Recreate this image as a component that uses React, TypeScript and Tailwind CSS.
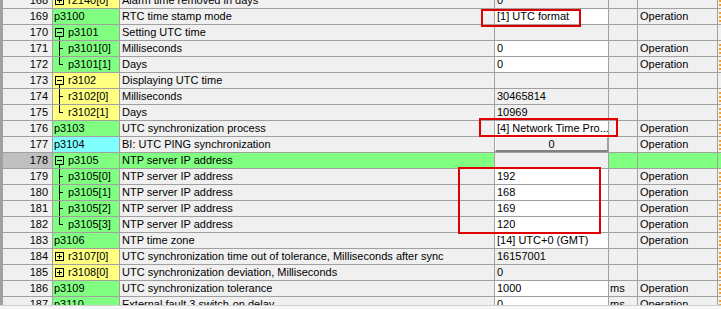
import React from 'react';

type Row = {
    n: number;
    p: string;
    c: 'g' | 'y' | 'c';
    d: string;
    icon?: '+' | '-';
    tree?: 'mid' | 'end';
    v?: string;
    vw?: boolean;
    button?: string;
    u?: string;
    a?: string;
    sel?: boolean;
    group?: boolean;
};

const rows: Row[] = [
    { n: 168, p: 'r2140[0]', c: 'y', icon: '+', d: 'Alarm time removed in days', v: '0' },
    { n: 169, p: 'p3100', c: 'g', d: 'RTC time stamp mode', v: '[1] UTC format', vw: true, a: 'Operation' },
    { n: 170, p: 'p3101', c: 'g', icon: '-', d: 'Setting UTC time', group: true },
    { n: 171, p: 'p3101[0]', c: 'g', tree: 'mid', d: 'Milliseconds', v: '0', vw: true, a: 'Operation' },
    { n: 172, p: 'p3101[1]', c: 'g', tree: 'end', d: 'Days', v: '0', vw: true, a: 'Operation' },
    { n: 173, p: 'r3102', c: 'y', icon: '-', d: 'Displaying UTC time', group: true },
    { n: 174, p: 'r3102[0]', c: 'y', tree: 'mid', d: 'Milliseconds', v: '30465814' },
    { n: 175, p: 'r3102[1]', c: 'y', tree: 'end', d: 'Days', v: '10969' },
    { n: 176, p: 'p3103', c: 'g', d: 'UTC synchronization process', v: '[4] Network Time Pro...', vw: true, a: 'Operation' },
    { n: 177, p: 'p3104', c: 'c', d: 'BI: UTC PING synchronization', button: '0', a: 'Operation' },
    { n: 178, p: 'p3105', c: 'g', icon: '-', d: 'NTP server IP address', sel: true, group: true },
    { n: 179, p: 'p3105[0]', c: 'g', tree: 'mid', d: 'NTP server IP address', v: '192', vw: true, a: 'Operation' },
    { n: 180, p: 'p3105[1]', c: 'g', tree: 'mid', d: 'NTP server IP address', v: '168', vw: true, a: 'Operation' },
    { n: 181, p: 'p3105[2]', c: 'g', tree: 'mid', d: 'NTP server IP address', v: '169', vw: true, a: 'Operation' },
    { n: 182, p: 'p3105[3]', c: 'g', tree: 'end', d: 'NTP server IP address', v: '120', vw: true, a: 'Operation' },
    { n: 183, p: 'p3106', c: 'g', d: 'NTP time zone', v: '[14] UTC+0 (GMT)', vw: true, a: 'Operation' },
    { n: 184, p: 'r3107[0]', c: 'y', icon: '+', d: 'UTC synchronization time out of tolerance, Milliseconds after sync', v: '16157001' },
    { n: 185, p: 'r3108[0]', c: 'y', icon: '+', d: 'UTC synchronization deviation, Milliseconds', v: '0' },
    { n: 186, p: 'p3109', c: 'g', d: 'UTC synchronization tolerance', v: '1000', vw: true, u: 'ms', a: 'Operation' },
    { n: 187, p: 'p3110', c: 'g', d: 'External fault 3 switch-on delay', v: '0', vw: true, u: 'ms', a: 'Operation' },
];

const paramBg = { g: 'bg-[#80ff80]', y: 'bg-[#ffff80]', c: 'bg-[#80ffff]' };

const TreeGlyph = ({ row }: { row: Row }) => (
    <svg width="14" height="15" viewBox="0 0 14 15" className="shrink-0" shapeRendering="crispEdges">
        {row.icon && (
            <>
                <rect x="1.5" y="3.5" width="8" height="8" fill="none" stroke="#000" />
                <line x1="3" y1="7.5" x2="8" y2="7.5" stroke="#000" />
                {row.icon === '+' && <line x1="5.5" y1="5" x2="5.5" y2="10" stroke="#000" />}
                {row.icon === '-' && <line x1="5.5" y1="12" x2="5.5" y2="15" stroke="#000" />}
            </>
        )}
        {row.tree && (
            <>
                <line x1="5.5" y1="0" x2="5.5" y2={row.tree === 'mid' ? 15 : 8} stroke="#000" />
                <line x1="5.5" y1="7.5" x2="9" y2="7.5" stroke="#000" />
            </>
        )}
    </svg>
);

const TableRow = ({ row }: { row: Row }) => {
    const rowGreen = row.sel;
    const cell = 'h-full border-r border-[#a0a0a0] flex items-center overflow-hidden whitespace-nowrap shrink-0';
    return (
        <div className="flex h-[16px] border-b border-[#a0a0a0] leading-[15px]">
            <div className={`${cell} w-[50px] justify-end pr-[4px] ${row.sel ? 'bg-[#c0c0c0]' : ''}`}>{row.n}</div>
            <div className={`${cell} w-[67px] pl-[1px] ${paramBg[row.c]}`}>
                {(row.icon || row.tree) && <TreeGlyph row={row} />}
                <span>{row.p}</span>
            </div>
            <div className={`${cell} w-[375px] pl-[2px] ${rowGreen ? 'bg-[#80ff80]' : ''}`}>{row.d}</div>
            <div className={`${cell} w-[114px] ${row.vw ? 'bg-white' : ''} ${row.button ? '' : 'pl-[2px]'}`}>
                {row.button ? (
                    <div className="w-full h-full flex items-center justify-center bg-[#f0f0f0] border-t border-l border-white border-b-2 border-r border-b-[#808080] border-r-[#a0a0a0]">
                        {row.button}
                    </div>
                ) : (
                    row.v
                )}
            </div>
            <div className={`${cell} w-[29px] pl-[1px] ${rowGreen ? 'bg-[#80ff80]' : ''}`}>{row.u}</div>
            <div className={`${cell} w-[80px] pl-[2px] ${rowGreen ? 'bg-[#80ff80]' : ''}`}>{row.a}</div>
            <div className={`h-full flex-1 flex items-center pl-[1px] ${rowGreen ? 'bg-[#80ff80]' : ''}`}>
                {!row.group && <span className="block w-[2px] h-[10px] border-l-2 border-dotted border-[#f59a23]" />}
            </div>
        </div>
    );
};

export default function App() {
    return (
        <div
            className="relative w-[721px] h-[309px] overflow-hidden bg-[#f0f0f0] text-[11px] text-black flex flex-col"
            style={{ fontFamily: '"Liberation Sans", Arial, sans-serif' }}
        >
            <div className="h-[305px] shrink-0 overflow-hidden border-l-[3px] border-[#a0a0a0]">
                <div className="-mt-[7px]">
                    {rows.map(r => (
                        <TableRow key={r.n} row={r} />
                    ))}
                </div>
            </div>
            <div className="flex-1 border-t border-[#d0d0d0] bg-[#f7f7f7]" />

            {/* annotation boxes */}
            <div className="absolute left-[481px] top-[9px] w-[100px] h-[18px] border-2 border-[#e00000]" />
            <div className="absolute left-[479px] top-[118px] w-[139px] h-[19px] border-2 border-[#e00000]" />
            <div className="absolute left-[458px] top-[167px] w-[143px] h-[67px] border-2 border-[#e00000]" />
        </div>
    );
}
